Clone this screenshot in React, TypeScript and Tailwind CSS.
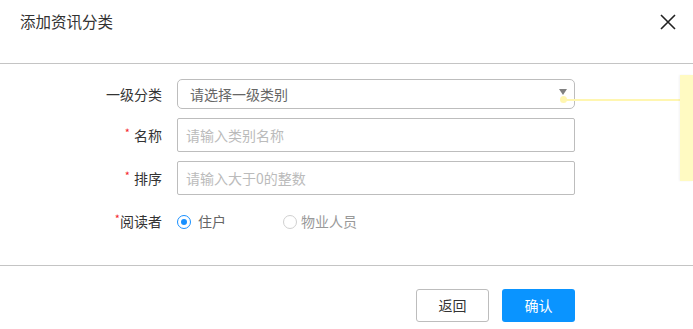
import { useState } from "react";

const font = { fontFamily: '"Noto Sans CJK SC", "Noto Sans", sans-serif' };

function Label({ text, required, gap }: { text: string; required?: boolean; gap?: boolean }) {
  return (
    <div className="flex w-[162px] shrink-0 items-center justify-end text-[14px] text-[#333]">
      {required && (
        <span className={gap ? "mr-[4px] text-[11px] leading-none text-[#f5222d] relative -top-[3px]" : "text-[11px] leading-none text-[#f5222d] relative -top-[3px]"}>
          *
        </span>
      )}
      {text}
    </div>
  );
}

function App() {
  const [reader, setReader] = useState("resident");

  return (
    <div className="relative h-[329px] w-[693px] overflow-hidden bg-white" style={font}>
      {/* header */}
      <div className="flex h-[64px] items-start justify-between border-b border-[#c4c4c4] pl-[20px] pr-[17px]">
        <div className="mt-[10px] text-[15.5px] text-[#333]">添加资讯分类</div>
        <button className="mt-[14px]">
          <svg width="16" height="16" viewBox="0 0 16 16">
            <path d="M1 1 L15 15 M15 1 L1 15" stroke="#222" strokeWidth="1.6" />
          </svg>
        </button>
      </div>

      {/* body */}
      <div className="flex h-[202px] flex-col border-b border-[#c4c4c4] pt-[15px]">
        <div className="flex items-center">
          <Label text="一级分类" />
          <div className="ml-[15px] flex h-[30px] w-[398px] items-center justify-between rounded-[5px] border border-[#bdbdbd] pl-[12px] pr-[7px]">
            <span className="text-[14px] text-[#666]">请选择一级类别</span>
            <span className="mb-[4px] h-0 w-0 border-x-[4px] border-t-[6px] border-x-transparent border-t-[#808080]" />
          </div>
        </div>

        <div className="mt-[9px] flex items-center">
          <Label text="名称" required gap />
          <input
            className="ml-[15px] h-[34px] w-[398px] rounded-[2px] border border-[#bdbdbd] px-[8px] text-[14px] outline-none placeholder:text-[#bbb]"
            placeholder="请输入类别名称"
          />
        </div>

        <div className="mt-[9px] flex items-center">
          <Label text="排序" required gap />
          <input
            className="ml-[15px] h-[34px] w-[398px] rounded-[2px] border border-[#bdbdbd] px-[8px] text-[14px] outline-none placeholder:text-[#bbb]"
            placeholder="请输入大于0的整数"
          />
        </div>

        <div className="mt-[16px] flex items-center">
          <Label text="阅读者" required />
          <div className="ml-[15px] flex items-center">
            <button className="flex items-center" onClick={() => setReader("resident")}>
              <span
                className={
                  reader === "resident"
                    ? "flex h-[14px] w-[14px] items-center justify-center rounded-full border border-[#1890ff]"
                    : "flex h-[14px] w-[14px] items-center justify-center rounded-full border border-[#d0d0d0]"
                }
              >
                {reader === "resident" && <span className="h-[6px] w-[6px] rounded-full bg-[#1890ff]" />}
              </span>
              <span className="ml-[7px] text-[14px] text-[#666]">住户</span>
            </button>
            <button className="ml-[57px] flex items-center" onClick={() => setReader("staff")}>
              <span
                className={
                  reader === "staff"
                    ? "flex h-[14px] w-[14px] items-center justify-center rounded-full border border-[#1890ff]"
                    : "flex h-[14px] w-[14px] items-center justify-center rounded-full border border-[#d0d0d0]"
                }
              >
                {reader === "staff" && <span className="h-[6px] w-[6px] rounded-full bg-[#1890ff]" />}
              </span>
              <span className="ml-[4px] text-[14px] text-[#999]">物业人员</span>
            </button>
          </div>
        </div>
      </div>

      {/* footer */}
      <div className="flex justify-end pr-[118px] pt-[23px]">
        <button className="h-[33px] w-[73px] rounded-[3px] border border-[#bdbdbd] bg-white text-[14px] text-[#333]">
          返回
        </button>
        <button className="ml-[13px] h-[33px] w-[73px] rounded-[3px] bg-[#0a94ff] text-[14px] text-white">
          确认
        </button>
      </div>

      {/* annotation note */}
      <div className="absolute left-[560px] top-[96px] h-[7px] w-[7px] rounded-full bg-[#fff6b0]" />
      <div className="absolute left-[564px] top-[99px] h-[2px] w-[116px] bg-[#fff6b0]" />
      <div className="absolute left-[680px] top-[75px] h-[106px] w-[13px] bg-[#fffac2] shadow-[-1px_0_2px_rgba(0,0,0,0.05)]" />
    </div>
  );
}

export default App;
